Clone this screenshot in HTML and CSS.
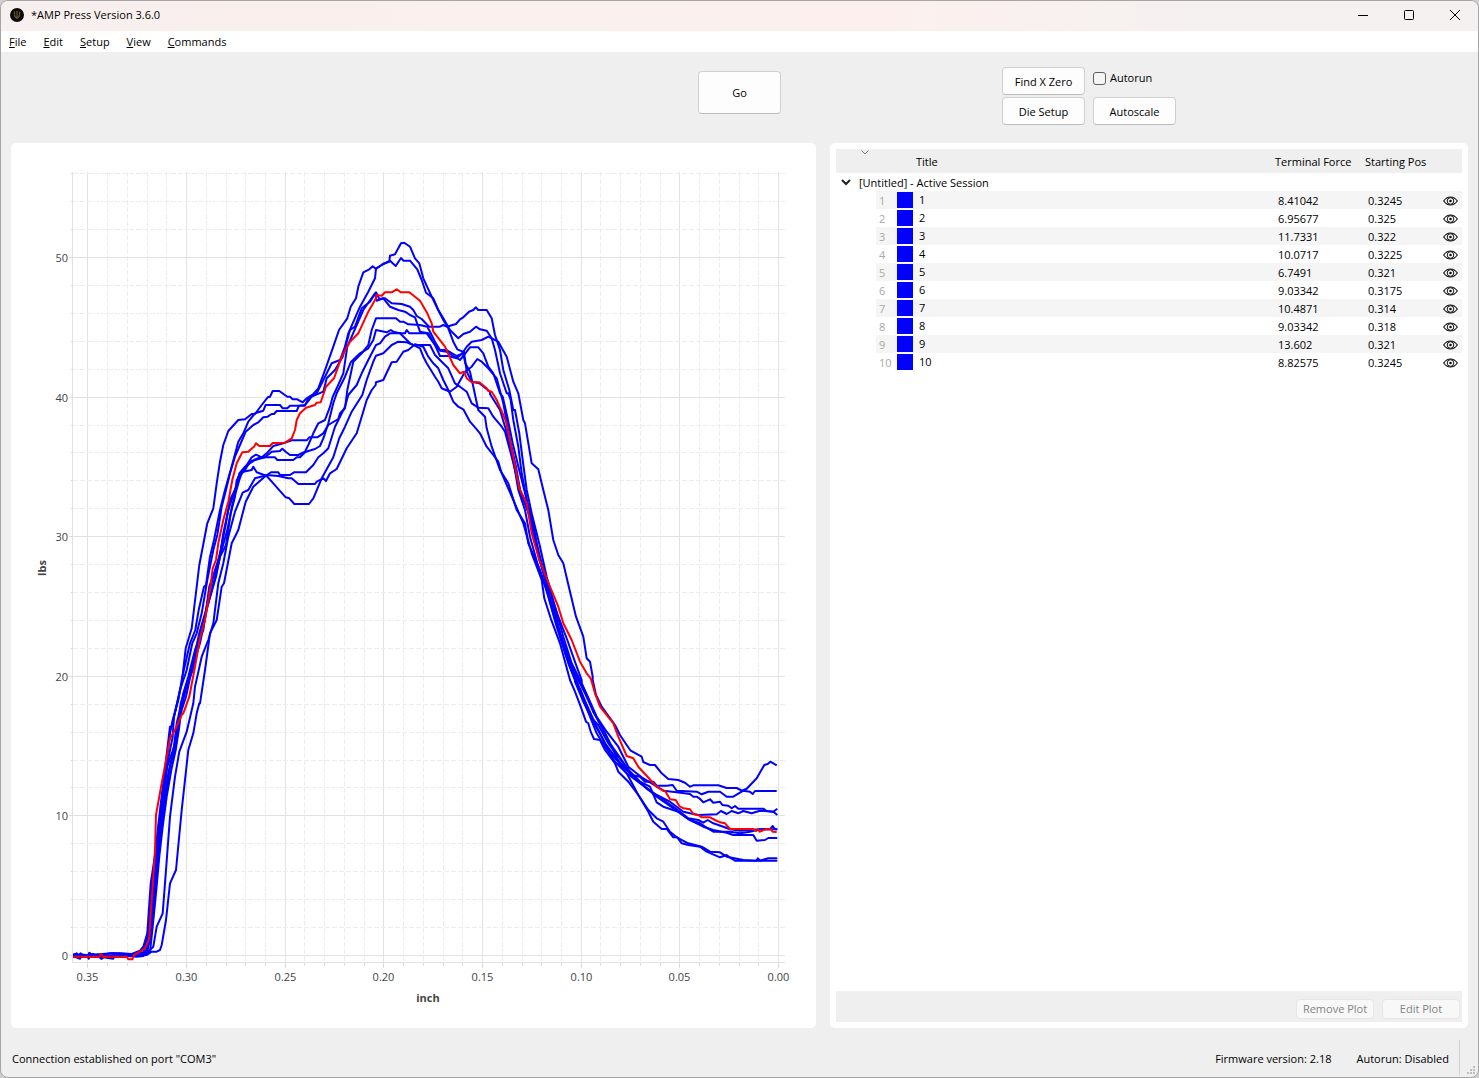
FILE: index.html
```
<!DOCTYPE html>
<html lang="en">
<head>
  <meta charset="UTF-8" />
  <meta name="viewport" content="width=device-width, initial-scale=1.0"/>
  <title>*AMP Press Version 3.6.0</title>
  <link rel="stylesheet" href="styles.css">
</head>
<body>
  <div class="window">
    <header class="titlebar">
      <svg class="app-icon" viewBox="0 0 14 14" width="14" height="14">
        <circle cx="7" cy="7" r="7" fill="#0b0b0b"/>
        <path d="M4.5 3.5v3.5q0 2.5 2.500 2.500t2.500-2.500V3.500M7 3v8" fill="none" stroke="#6b5420" stroke-width="1.200"/>
      </svg>
      <h1>*AMP Press Version 3.6.0</h1>
      <div class="window-buttons">
        <button aria-label="Minimize"><svg width="12" height="12"><path d="M1 6.5h10"/></svg></button>
        <button aria-label="Maximize"><svg width="12" height="12"><rect x="1.500" y="1.500" width="9" height="9" rx="1"/></svg></button>
        <button aria-label="Close"><svg width="12" height="12"><path d="M1 1l10 10M11 1L1 11"/></svg></button>
      </div>
    </header>

    <nav class="menubar">
      <button><u>F</u>ile</button>
      <button><u>E</u>dit</button>
      <button><u>S</u>etup</button>
      <button><u>V</u>iew</button>
      <button><u>C</u>ommands</button>
    </nav>

    <div class="toolbar">
      <button class="btn go">Go</button>
      <div class="controls">
        <button class="btn">Find X Zero</button>
        <div class="check">
          <input type="checkbox" id="autorun">
          <label for="autorun">Autorun</label>
        </div>
        <button class="btn">Die Setup</button>
        <button class="btn">Autoscale</button>
      </div>
    </div>

    <main class="panels">
      <section class="panel plot">
        <svg id="chart" viewBox="11 143 805 885">
          <g id="grid"></g>
          <g id="traces"></g>
          <g id="ticks"></g>
          <text class="axis-title" x="428" y="1002">inch</text>
          <text class="axis-title" transform="translate(46 568) rotate(-90)">lbs</text>
        </svg>
      </section>

      <section class="panel sessions">
        <table>
          <colgroup>
            <col class="col-branch"><col class="col-num"><col>
            <col class="col-force"><col class="col-pos"><col class="col-eye">
          </colgroup>
          <thead>
            <tr>
              <th colspan="2" class="sort"><svg width="8" height="5"><path d="M.5 .5l3.500 3.500 3.500-3.500"/></svg></th>
              <th class="title-head">Title</th>
              <th>Terminal Force</th>
              <th>Starting Pos</th>
              <th></th>
            </tr>
          </thead>
          <tbody id="plots">
            <tr class="session">
              <td colspan="6"><svg width="10" height="7"><path d="M1 1l4 4 4-4"/></svg>[Untitled] - Active Session</td>
            </tr>
          </tbody>
        </table>
        <div class="plot-actions">
          <button class="btn" disabled>Remove Plot</button>
          <button class="btn" disabled>Edit Plot</button>
        </div>
      </section>
    </main>

    <footer class="statusbar">
      <span class="message">Connection established on port "COM3"</span>
      <span>Firmware version: 2.18</span>
      <span class="autorun-state">Autorun: Disabled</span>
      <svg class="grip" width="9" height="9"><path d="M6 0h2v2h-2zM3 3h2v2h-2zM6 3h2v2h-2zM0 6h2v2h-2zM3 6h2v2h-2zM6 6h2v2h-2z"/></svg>
    </footer>
  </div>
  <script src="script.js"></script>
</body>
</html>
```

FILE: styles.css
```
* { margin: 0; padding: 0; box-sizing: border-box; }
html, body { height: 100%; }
body {
  font-family: "Open Sans", "Noto Sans", sans-serif;
  font-size: 11px;
  line-height: 16px;
  color: #000;
  background-color: #cfcfcf;
}
button, input { font: inherit; color: inherit; }

.window {
  height: 100vh;
  display: flex;
  flex-direction: column;
  background-color: #efefef;
  border: 1px solid #a5a5a5;
  border-radius: 8px;
  overflow: hidden;
}

/* title bar */
.titlebar {
  height: 30px;
  display: flex;
  align-items: center;
  padding: 0 0 2px 9px;
  background: linear-gradient(90deg, #f8f0ee, #fbf0ee 60%, #f4f1f0 85%);
}
.app-icon { margin-right: 7px; }
.titlebar h1 {
  flex: 1;
  font-size: 11px;
  font-weight: normal;
}
.window-buttons { display: flex; }
.window-buttons button {
  width: 46px;
  height: 28px;
  border: none;
  background: none;
}
.window-buttons svg {
  display: block;
  margin: 0 auto;
  fill: none;
  stroke: #000;
}

/* menu */
.menubar {
  height: 21px;
  display: flex;
  align-items: center;
  gap: 17px;
  padding: 0 8px;
  background-color: #fff;
}
.menubar button {
  border: none;
  background: none;
}

/* toolbar */
.btn {
  padding-top: 1px;
  border: 1px solid #d0d0d0;
  border-bottom-color: #bbb;
  border-radius: 4px;
  background-color: #fdfdfd;
}
.toolbar {
  height: 91px;
  display: grid;
  grid-template-columns: 1fr 83px 1fr;
}
.go {
  grid-column: 2;
  height: 43px;
  margin-top: 19px;
}
.controls {
  display: grid;
  grid-template-columns: 83px 83px;
  grid-template-rows: 28px 28px;
  gap: 2px 8px;
  align-content: start;
  padding: 15px 0 0 221px;
}
.check {
  display: flex;
  align-items: center;
  gap: 4px;
  height: 22px;
}
.check input {
  appearance: none;
  width: 13px;
  height: 13px;
  border: 1px solid #5f5f5f;
  border-radius: 3px;
  background-color: #f5f5f5;
}

/* panels */
.panels {
  flex: 1;
  min-height: 0;
  display: grid;
  grid-template-columns: 805fr 638fr;
  gap: 14px;
  padding: 0 10px;
}
.panel {
  min-width: 0;
  min-height: 0;
  background-color: #fff;
  border-radius: 5px;
}
.sessions {
  display: flex;
  flex-direction: column;
  padding: 6px;
}

/* chart */
#chart {
  display: block;
  width: 100%;
  height: 100%;
}
#chart text {
  font-size: 11px;
  fill: #444;
}
#chart .axis-title {
  font-weight: bold;
  text-anchor: middle;
}
.major { stroke: #e2e2e2; }
.minor { stroke: #ededed; stroke-dasharray: 5 2; }
.axis { stroke: #e2e2e2; stroke-width: 1; }
.tick { stroke: #dcdcdc; }
.x-label { text-anchor: middle; }
.y-label { text-anchor: end; }
.trace {
  fill: none;
  stroke: #00f;
  stroke-width: 2;
  stroke-linejoin: round;
}
.trace.current { stroke: #f00; }

/* plot list */
table {
  width: 100%;
  table-layout: fixed;
  border-collapse: collapse;
}
.col-branch { width: 40px; }
.col-num { width: 20px; }
.col-force { width: 90px; }
.col-pos { width: 75px; }
.col-eye { width: 24px; }
th {
  height: 24px;
  padding-top: 1px;
  font-weight: normal;
  text-align: left;
  white-space: nowrap;
  background-color: #efefef;
}
th + th { padding-left: 2px; }
th.title-head { padding-left: 20px; }
.sort { vertical-align: top; line-height: 0; }
.sort svg {
  display: block;
  margin: 0 0 0 25px;
  fill: none;
  stroke: #777;
}
td { height: 18px; padding-top: 1px; white-space: nowrap; }
td + td { padding-left: 5px; }
.session svg {
  margin: 0 8px 2px 5px;
  vertical-align: middle;
  fill: none;
  stroke: #222;
  stroke-width: 2;
}
.plot-row:nth-child(even) td + td { background-color: #f5f5f5; }
.plot-row .num { padding-left: 3px; color: #a8a8a8; }
.plot-row .title { padding: 0 0 0 1px; }
.title div { display: flex; align-items: center; gap: 6px; }
.swatch {
  width: 16px;
  height: 16px;
  background-color: #00f;
}
.plot-row .eye { padding-left: 5px; }
.eye svg { display: block; }
.plot-actions {
  display: flex;
  align-items: center;
  justify-content: flex-end;
  gap: 8px;
  height: 31px;
  margin-top: auto;
  padding: 4px 2px 0 0;
  background-color: #efefef;
}
.plot-actions .btn {
  width: 78px;
  height: 20px;
  border-color: #e6e6e6;
  background-color: #f8f8f8;
  color: #838383;
}

/* status bar */
.statusbar {
  height: 49px;
  display: flex;
  align-items: stretch;
  padding: 12px 2px 2px 11px;
  line-height: 37px;
}
.message { flex: 1; }
.autorun-state {
  margin-left: 25px;
  padding-right: 10px;
  border-right: 1px solid #d2d2d2;
}
.grip {
  align-self: flex-end;
  margin-left: 7px;
  fill: #bdbdbd;
}
```

FILE: script.js
```
const NS = 'http://www.w3.org/2000/svg';
const grid = document.getElementById('grid');
const ticks = document.getElementById('ticks');
const traces = document.getElementById('traces');

function add(parent, tag, attrs, text) {
  const el = document.createElementNS(NS, tag);
  for (const key in attrs) el.setAttribute(key, attrs[key]);
  if (text) el.textContent = text;
  parent.appendChild(el);
}

const xPos = v => Math.round(778 - v * 1973) + 0.5;
const yPos = v => Math.round(955 - v * 13.96) + 0.5;

// vertical lines every 0.01 inch, labelled every 0.05
for (let i = 0; i <= 35; i++) {
  const x = xPos(i / 100);
  const major = i % 5 === 0;
  add(grid, 'line', { x1: x, x2: x, y1: 172, y2: 963, class: major ? 'major' : 'minor' });
  add(ticks, 'line', { x1: x, x2: x, y1: 963, y2: major ? 968 : 966, class: 'tick' });
  if (major) add(ticks, 'text', { x: x, y: 981, class: 'x-label' }, (i / 100).toFixed(2));
}

// horizontal lines every 2 lbs, labelled every 10
for (let v = 0; v <= 56; v += 2) {
  const y = yPos(v);
  const major = v % 10 === 0;
  add(grid, 'line', { x1: 73, x2: 785, y1: y, y2: y, class: major ? 'major' : 'minor' });
  add(ticks, 'line', { x1: major ? 69 : 71, x2: 73, y1: y, y2: y, class: 'tick' });
  if (major) add(ticks, 'text', { x: 68, y: y + 4, class: 'y-label' }, String(v));
}
add(grid, 'line', { x1: 72.5, x2: 72.5, y1: 172, y2: 963, class: 'axis' });
add(grid, 'line', { x1: 73, x2: 785, y1: 962.5, y2: 962.5, class: 'axis' });

// Each trace is split in six blocks, one for each origin below.
// Offsets inside a block are in thirds of a unit.
const origins = [[60, 700], [160, 470], [200, 370], [320, 230], [480, 380], [560, 640]];

const data = [
  [
    '40,766 50,760 56,774 62,760 68,768 84,768 88,758 94,766 118,766 124,776 130,764 150,760 180,760 215,762 240,752 250,740 262,700 272,550 283,480 300,330 318,180 330,80',
    '35,770 48,715 65,640 77,535 95,475 118,285 142,160 160,115',
    '50,340 60,275 70,225 85,183 115,150 135,148 155,132 165,132 185,105 203,82 210,80 218,63 238,63 262,80 270,80 278,88 292,88 308,97 320,85 340,72 355,55',
    '18,412 40,350 57,300 82,265 92,230 108,205 115,170 130,127 148,118 158,109 168,117 190,101 208,95 210,77 225,73 243,40 253,38 270,50 285,85 298,100 310,145 335,200 352,235 370,270 385,295 400,335 412,358 428,365 436,400 450,425 460,470 475,540 495,560',
    '12,110 20,145 35,200 60,270 85,310 110,390 135,430 145,490 180,570 205,650 230,740 255,820 285,900',
    '35,70 62,150 90,220 105,255 125,290 150,340 185,375 210,395 240,425 270,440 290,487 310,500 355,515 390,540 430,560 460,570 500,578 520,585 580,585 590,602 615,600 625,594 652,594'
  ],
  [
    '40,770 52,762 56,770 85,770 90,760 96,768 130,772 160,776 166,762 210,764 240,758 255,740 265,690 275,560 288,450 303,330 318,200 330,100',
    '38,750 55,690 67,620 90,520 106,480 116,420 132,350 138,345 150,260 162,210 180,120 195,60',
    '92,300 103,260 115,215 130,190 145,155 165,130 190,122 197,105 240,105 248,115 262,115 270,107 315,107 325,85 350,70',
    '0,470 15,440 35,400 60,390 75,350 85,310 120,230 145,185 165,145 168,115 185,105 210,92 227,108 243,84 250,92 270,92 292,118 305,150 318,188 340,205 355,240 370,265 390,300 415,325 430,312 450,305 468,290 480,298 500,302 515,325 525,360 540,430 560,490',
    '72,0 85,40 92,60 100,120 115,200 125,280 140,360 160,430 175,520 195,600 220,690 245,780 270,850 295,900',
    '20,35 45,90 75,160 100,215 130,270 160,330 180,375 200,400 235,465 265,510 275,520 290,535 310,545 330,575 350,592 385,610 425,620 450,635 480,637 500,650 550,660 590,662 593,655 600,662 625,655 652,655'
  ],
  [
    '40,764 50,772 58,762 90,768 120,766 140,770 200,768 230,766 250,758 260,730 268,690 280,560 292,450 306,320 320,200 338,110',
    '42,740 60,660 80,600 97,520 110,490 125,430 142,330 160,240 172,195 185,110 198,60',
    '90,310 105,260 120,225 137,185 160,165 175,157 190,142 203,140 215,132 222,132 230,123 290,123 297,107 315,105 335,80 370,65',
    '20,445 45,420 68,380 90,300 105,290 125,235 150,215 168,187 178,207 195,205 215,220 245,222 270,230 280,240 290,258 305,267 320,283 328,290 360,290 370,285 380,290 408,282 420,268 430,262 447,245 460,240 467,232 475,240 500,240 515,265 525,315 540,360 550,420 568,480 580,540',
    '95,30 105,90 118,160 128,240 140,330 155,400 180,500 200,590 225,680 250,770 275,850 300,900',
    '25,40 55,110 85,175 100,215 120,250 150,310 185,360 215,405 240,410 255,425 280,425 290,437 320,437 338,435 350,452 410,455 425,463 445,455 480,455 500,470 520,470 550,452 570,455 578,462 585,453 650,453'
  ],
  [
    '40,768 60,776 66,764 95,766 150,768 220,764 250,758 265,700 277,620 288,500 300,380 312,270 322,200 342,140 350,70',
    '55,740 70,670 85,620 105,540 130,480 148,350 170,290 182,240 196,170 210,90 232,45',
    '118,310 135,290 165,270 195,262 215,245 240,243 247,236 258,246 270,255 295,255 315,245 325,225 340,190 355,160 375,150 390,110',
    '38,500 50,475 70,430 82,350 95,320 130,240 165,190 170,212 190,205 210,230 235,240 255,245 270,255 285,262 300,305 325,310 345,345 360,378 385,378 410,385 432,365 440,425 455,455 478,460 510,485',
    '30,42 60,90 78,150 100,240 115,330 135,390 150,470 175,560 200,630 225,720 240,760 265,840 285,890',
    '22,50 45,110 70,180 90,230 110,280 135,320 165,365 200,400 240,430 290,465 330,485 350,500 370,515 390,520 415,525 470,523 483,513 500,522 515,513 535,520 550,513 575,520 600,512 640,515 652,525'
  ],
  [
    '40,762 70,768 100,762 125,776 135,768 190,764 225,768 255,762 270,710 280,620 292,490 303,380 314,290 325,220 338,160 348,110',
    '60,730 82,640 100,570 118,490 138,420 152,350 165,300 185,240 202,180 218,100 238,30',
    '125,310 140,285 155,262 168,254 185,262 200,250 220,228 250,220 275,211 320,211 328,202 352,202 370,190 385,165 415,147 420,130 435,115',
    '70,530 82,480 100,395 125,370 145,345 155,300 168,265 228,265 240,275 250,275 265,283 300,285 322,290 330,305 345,335 360,360 380,360 410,378 425,372 440,350 455,335 485,330 505,320 515,325 535,335 560,380 580,455 595,490 610,570',
    '118,45 125,90 135,130 155,250 175,268 190,330 205,390 220,480 235,525 250,550 270,635 288,710 310,770 320,835 330,845 338,890',
    '80,55 90,65 98,120 108,165 125,200 165,255 180,285 200,315 212,332 245,350 250,366 270,375 285,375 305,400 325,417 355,420 375,428 390,440 400,436 475,436 500,444 530,444 545,452 560,446 590,415 613,375 623,372 631,365 650,376'
  ],
  [
    '40,772 80,766 86,776 92,764 160,760 200,762 240,766 262,755 272,705 283,600 294,480 306,370 316,300 330,200 345,150 355,90',
    '65,720 78,680 95,600 120,520 142,410 158,350 178,270 190,190 205,120 225,60',
    '115,320 135,300 150,275 180,262 225,262 232,270 280,270 290,262 300,262 315,247 325,243 345,237 360,228 372,200 385,160 400,100',
    '30,550 50,490 75,440 92,397 120,370 145,355 160,330 168,300 200,307 212,300 220,305 240,310 255,310 260,300 268,310 320,310 345,345 360,362 380,365 400,378 420,390 440,365 450,352 475,352 490,370 505,410 520,430 540,490',
    '68,50 82,110 98,190 120,280 138,350 155,430 178,540 205,620 235,710 262,780 290,860 305,900',
    '38,60 65,130 90,185 110,230 140,275 175,320 205,380 245,412 275,430 310,452 350,457 390,462 400,470 410,470 418,475 430,487 450,478 460,488 480,485 487,495 505,497 515,505 525,498 535,506 610,506 620,513 640,515 652,506'
  ],
  [
    '40,768 100,770 180,766 230,770 250,768 280,740 290,680 308,640 318,510 330,350 345,230 358,155 380,95 400,10',
    '105,650 125,560 145,510 160,460 175,340 190,280 205,200 225,125 248,68 265,60',
    '165,325 200,316 213,307 235,307 240,315 270,315 282,307 318,307 340,285 355,262 370,250 385,235 405,170',
    '60,560 75,530 85,495 110,465 125,430 145,390 168,345 180,340 195,320 210,310 240,310 270,340 300,355 310,380 320,400 345,440 355,455 365,475 390,485 410,470 435,425 455,410 472,387 485,395 505,415 530,445 550,520',
    '50,45 70,110 90,180 108,260 122,340 150,410 165,490 190,570 215,650 240,760 265,830 290,900',
    '15,40 38,90 60,155 85,205 110,260 135,310 165,350 200,390 230,420 265,450 300,472 350,508 385,535 415,540 430,548 443,540 460,550 490,560 510,568 540,572 600,568 630,568 638,558 645,568 652,568'
  ],
  [
    '40,764 110,768 190,770 220,764 245,768 270,755 276,700 287,590 298,470 308,380 320,290 334,210 347,150 358,80',
    '62,700 80,650 98,600 122,480 148,390 168,320 180,260 198,225 212,130 225,80',
    '110,330 130,305 155,300 160,290 170,307 200,318 220,340 257,382 268,385 283,402 327,402 340,385 365,325 400,262 418,205',
    '75,590 95,545 127,495 140,450 160,395 168,377 190,370 215,345 235,335 260,337 280,345 330,345 345,375 365,395 385,415 405,460 420,470 440,485 455,520 475,533 505,535 520,560 545,590',
    '75,155 95,230 120,330 140,380 160,450 185,550 210,660 240,760 265,850 285,900',
    '20,60 45,125 70,185 95,235 115,255 145,310 175,350 210,395 250,435 290,470 350,512 385,538 420,550 435,560 460,575 510,575 540,580 570,575 600,568 652,568'
  ],
  [
    '40,766 130,770 225,768 260,765 275,755 290,755 300,750 305,735 318,660 330,550 348,510 365,330 385,150 400,100 410,40 418,10',
    '108,740 120,700 135,600 150,490 170,450 185,350 192,340 215,220 235,180 257,95',
    '160,350 200,315 235,318 265,325 275,325 295,342 345,342 350,335 370,325 378,333 390,310 410,297 440,235 470,190',
    '125,560 140,510 155,480 167,465 168,457 190,450 215,397 230,395 250,365 265,360 285,343 310,350 325,380 340,400 355,415 370,450 385,480 400,515 415,530 430,538 450,575 470,598',
    '0,160 20,200 40,225 55,245 65,280 100,360 130,430 155,520 185,600 193,655 212,715 240,790 270,900',
    '22,100 45,155 62,200 78,245 85,250 92,275 102,297 120,300 135,330 165,370 175,395 205,425 235,465 265,515 280,545 305,567 320,567 340,592 352,592 365,610 385,615 420,620 440,635 480,652 500,645 510,653 525,662 652,662'
  ],
  [
    '40,770 118,770 123,762 128,770 200,770 205,778 217,778 222,765 240,755 255,745 268,715 272,640 278,560 285,450 288,345 305,250 320,170 330,115 345,90 365,45',
    '70,730 88,680 105,590 120,505 135,450 150,360 158,295 168,270 175,220 190,150 205,95',
    '97,330 110,280 127,247 145,245 158,233 162,230 168,220 178,228 210,228 218,219 255,218 275,205 285,180 290,150 300,130 318,113 345,105 350,98 362,97',
    '18,470 42,445 65,380 90,335 115,310 145,245 168,205 169,195 185,197 195,187 215,187 230,178 242,187 268,187 300,212 322,250 335,280 340,305 375,350 400,405 420,430 432,425 440,445 455,457 478,457 500,475 505,483 515,485 530,510 550,555',
    '78,125 100,230 118,325 140,370 155,460 178,540 210,620 235,680 250,730 275,780 300,845 320,880',
    '70,85 92,115 105,160 120,200 160,250 175,290 200,348 220,355 235,380 290,440 310,452 315,452 330,478 347,480 358,498 370,505 390,508 400,522 415,525 425,532 450,532 465,540 480,547 495,550 510,567 580,567 588,573 593,568 600,575 615,568 632,567 638,575 650,576'
  ]
];

data.forEach((blocks, i) => {
  const points = [];
  let last = 0;
  blocks.forEach((block, b) => block.split(' ').forEach(p => {
    const [dx, dy] = p.split(',').map(Number);
    const x = origins[b][0] + dx / 3;
    // neighbouring blocks overlap a little, so never step back
    if (x < last) return;
    last = x;
    points.push(x.toFixed(1) + ',' + (origins[b][1] + dy / 3).toFixed(1));
  }));
  add(traces, 'polyline', { points: points.join(' '), class: i === 9 ? 'trace current' : 'trace' });
});

const plots = [
  ['8.41042', '0.3245'],
  ['6.95677', '0.325'],
  ['11.7331', '0.322'],
  ['10.0717', '0.3225'],
  ['6.7491', '0.321'],
  ['9.03342', '0.3175'],
  ['10.4871', '0.314'],
  ['9.03342', '0.318'],
  ['13.602', '0.321'],
  ['8.82575', '0.3245']
];

const eye = `<svg width="15" height="10" viewBox="0 0 15 10" fill="none" stroke="#111">
  <path d="M.7 5Q3.500 1 7.500 1t6.800 4Q11.500 9 7.500 9T.7 5z" stroke-width="1.200"/>
  <circle cx="7.500" cy="5" r="3.300"/><circle cx="7.500" cy="5" r="1.300" fill="#111" stroke="none"/></svg>`;

document.getElementById('plots').insertAdjacentHTML('beforeend', plots.map((p, i) => `
  <tr class="plot-row">
    <td></td>
    <td class="num">${i + 1}</td>
    <td class="title"><div><span class="swatch"></span>${i + 1}</div></td>
    <td>${p[0]}</td>
    <td>${p[1]}</td>
    <td class="eye">${eye}</td>
  </tr>`).join(''));
```
